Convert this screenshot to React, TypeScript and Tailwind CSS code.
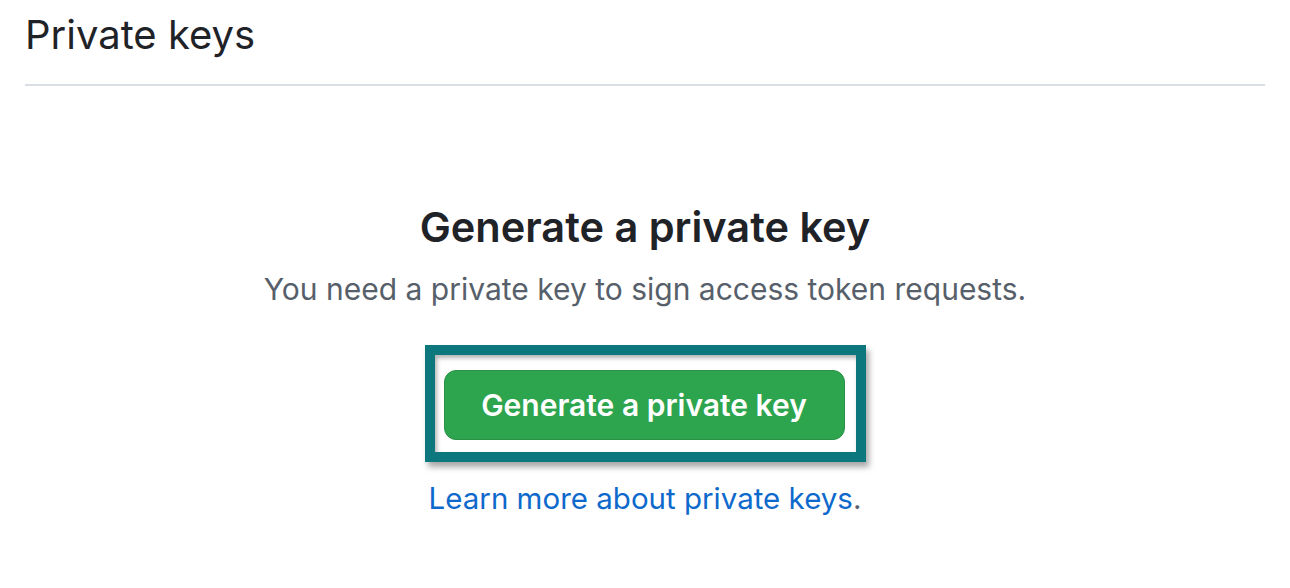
export default function App() {
  return (
    <div className="min-h-[588px] bg-white px-[25px] font-['Inter','Liberation_Sans',sans-serif]">
      <div className="border-b-2 border-[#d8dee4] pt-[10px] pb-[24px]">
        <h2 className="text-[40px] leading-[50px] font-normal text-[#1f2328]">Private keys</h2>
      </div>

      <div className="flex flex-col items-center pt-[115px]">
        <h3 className="text-[41.5px] leading-[52px] font-semibold text-[#1f2328]">Generate a private key</h3>
        <p className="mt-[18px] text-[30px] leading-[36px] text-[#57606a]">
          You need a private key to sign access token requests.
        </p>

        <div className="mt-[38px] border-[10px] border-[#0c777c] bg-white pt-[15px] pb-[12px] pl-[9px] pr-[11px] shadow-[3px_5px_6px_rgba(0,0,0,0.35),inset_2px_3px_4px_rgba(0,0,0,0.3)]">
          <button
            type="button"
            className="flex h-[70px] w-[401px] items-center justify-center rounded-[12px] border border-[#2a9147] bg-[#2da44e] text-[30px] font-semibold text-white"
          >
            Generate a private key
          </button>
        </div>

        <p className="mt-[18px] text-[29.5px] leading-[36px] text-[#57606a]">
          <a href="#" className="text-[#0e69cc]">Learn more about private keys</a>.
        </p>
      </div>
    </div>
  );
}
